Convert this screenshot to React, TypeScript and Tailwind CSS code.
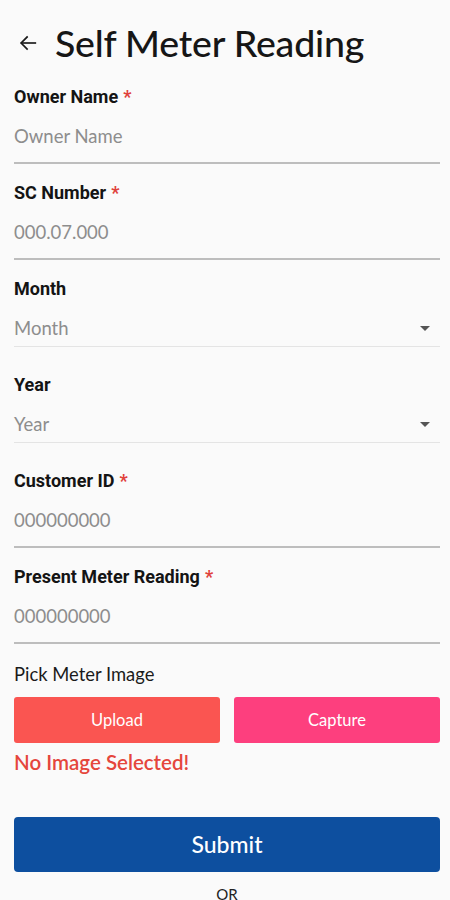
import React from 'react';

const lato = "font-['Lato','Open_Sans',sans-serif]";
const roboto = "font-['Roboto','Noto_Sans',sans-serif]";

type Field = { label: string; placeholder: string; required?: boolean; select?: boolean };

const fields: Field[] = [
  { label: 'Owner Name', placeholder: 'Owner Name', required: true },
  { label: 'SC Number', placeholder: '000.07.000', required: true },
  { label: 'Month', placeholder: 'Month', select: true },
  { label: 'Year', placeholder: 'Year', select: true },
  { label: 'Customer ID', placeholder: '000000000', required: true },
  { label: 'Present Meter Reading', placeholder: '000000000', required: true },
];

const BackArrow = () => (
  <svg width="22" height="22" viewBox="0 0 24 24" fill="none" stroke="#1a1a1a" strokeWidth="1.8" strokeLinecap="square">
    <path d="M20 12H5" />
    <path d="M11 5.5 4.5 12l6.5 6.5" />
  </svg>
);

const FormField = ({ field }: { field: Field }) => (
  <div className="h-[96px]">
    <div className={`h-5 text-[18px] leading-5 font-bold text-[#141414] ${roboto}`}>
      {field.label}
      {field.required && <span className="text-[#e0413a] ml-[5px]">*</span>}
    </div>
    {field.select ? (
      <div className="flex items-center justify-between pt-[17px] pb-[6px] border-b border-[#e4e4e4] pr-[10px]">
        <span className={`h-6 text-[18.5px] leading-6 text-[#8d8d8d] ${lato}`}>{field.placeholder}</span>
        <span className="w-0 h-0 border-l-[5px] border-r-[5px] border-t-[5px] border-l-transparent border-r-transparent border-t-[#555]" />
      </div>
    ) : (
      <div className="pt-[17px] pb-[14px] border-b-2 border-[#bdbdbd]">
        <span className={`block h-6 text-[18.5px] leading-6 text-[#8d8d8d] ${lato}`}>{field.placeholder}</span>
      </div>
    )}
  </div>
);

export default function App() {
  return (
    <div className={`w-[450px] h-[900px] overflow-hidden bg-[#fafafa] pl-[14px] pr-[10px] ${lato}`}>
      <div className="h-[87px] flex items-center pb-[2px]">
        <div className="w-[41px] pl-[3px] flex items-center">
          <BackArrow />
        </div>
        <h1 className="text-[37.5px] leading-none font-medium text-[#161616] tracking-[-0.2px]">Self Meter Reading</h1>
      </div>

      {fields.map((f) => (
        <FormField key={f.label} field={f} />
      ))}

      <div className="h-5 text-[18.4px] leading-5 text-[#1a1a1a] mt-[1px]">Pick Meter Image</div>
      <div className="flex gap-[14px] mt-[13px]">
        <button className="flex-1 h-[46px] rounded-[3px] bg-[#fa5551] text-white text-[16.5px]">Upload</button>
        <button className="flex-1 h-[46px] rounded-[3px] bg-[#fd3f7e] text-white text-[16.5px]">Capture</button>
      </div>
      <div className="mt-[7px] h-6 text-[20.5px] leading-6 font-semibold text-[#e5463c]">No Image Selected!</div>

      <button className="mt-[43px] w-full h-[55px] rounded-[4px] bg-[#0d4f9f] text-white text-[23px] font-medium">Submit</button>
      <div className="mt-[12px] text-center text-[15px] leading-5 text-[#222]">OR</div>
    </div>
  );
}
